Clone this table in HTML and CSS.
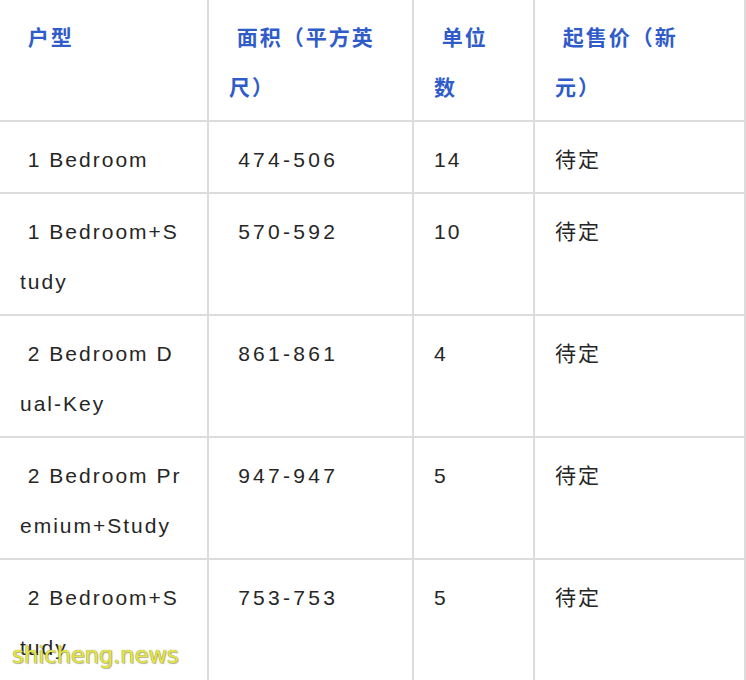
FILE: index.html
```html
<!DOCTYPE html>
<html lang="zh-CN">
<head>
<meta charset="utf-8">
<title>户型</title>
<link rel="stylesheet" href="styles.css">
</head>
<body>
<div class="page">
  <table class="units">
    <colgroup>
      <col class="c-type">
      <col class="c-area">
      <col class="c-count">
      <col class="c-price">
    </colgroup>
    <thead>
      <tr>
        <th class="col-type">&nbsp;户型</th>
        <th class="col-area">&nbsp;面积（平方英尺）</th>
        <th class="col-count">&nbsp;单位数</th>
        <th class="col-price">&nbsp;起售价（新元）</th>
      </tr>
    </thead>
    <tbody>
      <tr>
        <td class="col-type">&nbsp;1 Bedroom</td>
        <td class="col-area num">&nbsp;474-506</td>
        <td class="col-count">14</td>
        <td class="col-price">待定</td>
      </tr>
      <tr>
        <td class="col-type">&nbsp;1 Bedroom+Study</td>
        <td class="col-area num">&nbsp;570-592</td>
        <td class="col-count">10</td>
        <td class="col-price">待定</td>
      </tr>
      <tr>
        <td class="col-type">&nbsp;2 Bedroom Dual-Key</td>
        <td class="col-area num">&nbsp;861-861</td>
        <td class="col-count">4</td>
        <td class="col-price">待定</td>
      </tr>
      <tr>
        <td class="col-type">&nbsp;2 Bedroom Premium+Study</td>
        <td class="col-area num">&nbsp;947-947</td>
        <td class="col-count">5</td>
        <td class="col-price">待定</td>
      </tr>
      <tr>
        <td class="col-type">&nbsp;2 Bedroom+Study</td>
        <td class="col-area num">&nbsp;753-753</td>
        <td class="col-count">5</td>
        <td class="col-price">待定</td>
      </tr>
    </tbody>
  </table>
  <div class="watermark">shicheng.news</div>
</div>
</body>
</html>
```
FILE: styles.css
```css
html, body {
  margin: 0;
  padding: 0;
  background: #ffffff;
}

.page {
  position: relative;
  width: 746px;
  height: 680px;
  overflow: hidden;
}

.units {
  margin: -2px 0 0 -2px;
  width: 748px;
  table-layout: fixed;
  border-collapse: collapse;
  font-family: "Liberation Sans", "Noto Sans CJK SC", sans-serif;
  font-size: 21px;
  letter-spacing: 2px;
  line-height: 50px;
  color: #262626;
}

.c-type { width: 209px; }
.c-area { width: 205px; }
.c-count { width: 121px; }
.c-price { width: 211px; }

.units th,
.units td {
  border: 2px solid #dcdcdc;
  padding: 13px 20px 7px 20px;
  text-align: left;
  vertical-align: top;
  word-break: break-all;
}

.units th {
  color: #2f5cc9;
  font-weight: bold;
}

.units .col-type { padding-right: 22px; }
.units .col-area { padding-right: 26px; }
.units .col-count { padding-right: 30px; }
.units .col-price { padding-right: 52px; }

.units td.num {
  letter-spacing: 3.3px;
}

.watermark {
  position: absolute;
  left: 12px;
  top: 642px;
  font-family: "DejaVu Sans", sans-serif;
  font-size: 23px;
  letter-spacing: -0.3px;
  color: #e6e645;
  text-shadow: 0 0 1px #707030, 1px 1px 1px rgba(80, 80, 20, 0.4);
}
```
